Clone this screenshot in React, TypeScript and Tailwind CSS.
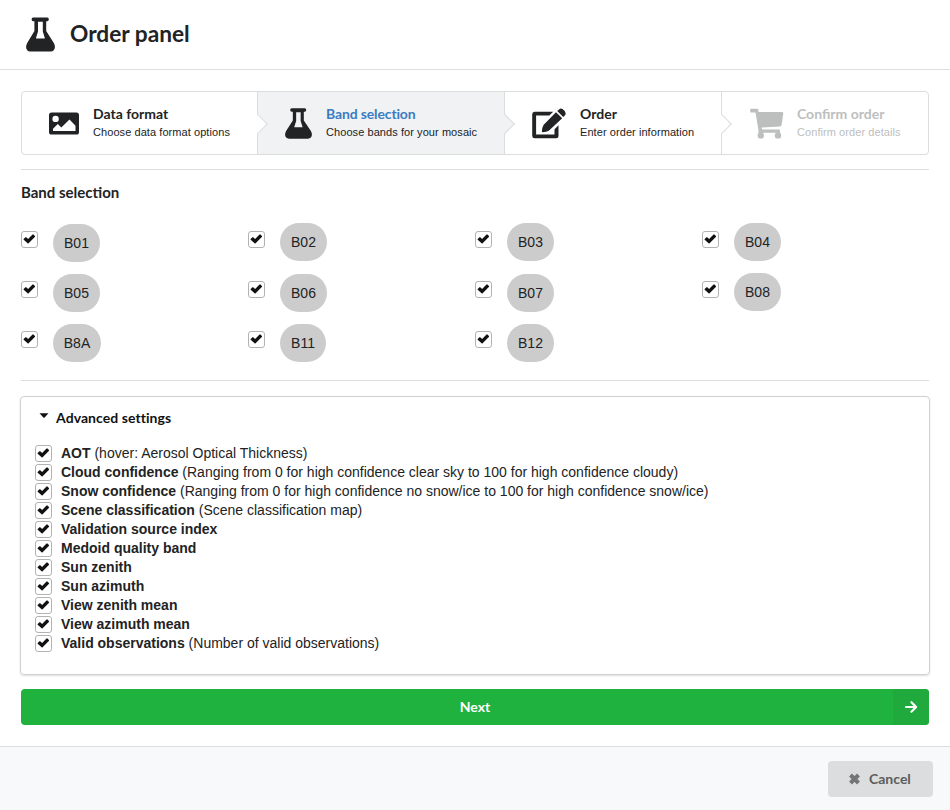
import React from 'react';

const sans = "font-['Liberation_Sans',Arial,sans-serif]";

function Flask({ className }: { className: string }) {
  return (
    <svg viewBox="0 0 30 35" preserveAspectRatio="none" className={className} fill="currentColor" fillRule="evenodd">
      <path d="M7.4 0.4H22Q23.6 0.4 23.6 2.3Q23.6 4.3 22 4.3H20.9V14L28.6 25.8C31.4 30.4 29.4 34.6 25.6 34.6H4.4C.6 34.6-1.4 30.4 1.4 25.8L8.7 14V4.3H7.4Q5.8 4.3 5.8 2.3Q5.8 .4 7.4 .4ZM12.4 4.7V14.6L10.2 21.6H19.6L17.4 14.6V4.7Z" />
    </svg>
  );
}

function Picture() {
  return (
    <svg viewBox="0 0 30 23" className="h-[23px] w-[30px] shrink-0" fill="currentColor" fillRule="evenodd">
      <path d="M2.6 .4H27.4Q30 .4 30 3V20Q30 22.6 27.4 22.6H2.6Q0 22.6 0 20V3Q0 .4 2.6 .4ZM6.6 3.7A3.2 3.2 0 1 0 6.6 10.1A3.2 3.2 0 1 0 6.6 3.7ZM4 19H26.5V13.8L20.5 7.5L12.3 15.4L8.8 12L4 16.8Z" />
    </svg>
  );
}

function Edit() {
  return (
    <svg viewBox="0 0 34 31" className="h-[31px] w-[34px] shrink-0" fill="currentColor">
      <path d="M2.6 3.7H21.2L17.4 7.6H4.1V26.4H22.5V21.2L26.5 17.2V27.8Q26.5 30.3 24 30.3H2.6Q.2 30.3 .2 27.8V6.2Q.2 3.7 2.6 3.7Z" />
      <path d="M24 4.2L30.2 10.2L16.8 22.8Q14.5 24.2 10.7 24.2Q9.8 24.2 9.9 23.3Q10.1 19.3 11.7 16.8ZM25.2 3.1L27 1.4Q28.7 0 30.5 1.1Q33 2.5 33.6 5Q34 6.7 32.6 7.8L31.2 9.1Z" />
    </svg>
  );
}

function Cart() {
  return (
    <svg viewBox="0 0 34 31" className="h-[31px] w-[34px] shrink-0" fill="currentColor">
      <path d="M.8 .8H7.2Q8.4 .8 8.4 2V4H32Q33.4 4 33.3 5.5L31.6 17Q31.4 18.4 29.8 18.6L11.8 19.5L12 21.4H29Q30 21.4 30 23Q30 24.8 29 24.8H10Q9 24.8 8.7 23.6L5.5 4.5H.8Q.1 4.5 .1 2.7Q.1 .8 .8 .8Z" />
      <circle cx="10.8" cy="27.4" r="3.2" />
      <circle cx="28" cy="27.4" r="3.2" />
      <path d="M8.7 22.5H12.5V26H8.7ZM27 22.5H30V26H27Z" />
    </svg>
  );
}

function CheckBox() {
  return (
    <span className="flex h-[17px] w-[17px] shrink-0 items-start rounded-[3px] border border-[#b3b3b3] bg-white pl-px pt-[2px] text-[#111]">
      <svg viewBox="-0.4 0 12 10" className="h-[10px] w-3" fill="currentColor">
        <path d="M.3 5.1L2 3.3Q2.4 3 2.8 3.3L4.7 5.1L9.1.6Q9.6.2 10.1.6L11.5 2.1Q11.8 2.6 11.4 3L5.2 9.3Q4.7 9.7 4.2 9.3L.3 5.8Q0 5.5.3 5.1Z" />
      </svg>
    </span>
  );
}

function Arrow({ tone }: { tone: string }) {
  return (
    <span className={`absolute -right-[8px] top-[25px] z-10 h-[14px] w-[14px] -rotate-45 border-b border-r border-[#dcdddd] ${tone}`} />
  );
}

type StepProps = {
  icon: React.ReactNode;
  title: string;
  detail: string;
  box: string;
  titleTone?: string;
  arrow?: string;
};

function Step({ icon, title, detail, box, titleTone = '', arrow }: StepProps) {
  return (
    <div className={`relative flex h-full items-center ${box}`}>
      {icon}
      <div className="pb-px">
        <div className={`font-[Lato,sans-serif] text-[14px] font-bold leading-[18px] ${titleTone}`}>{title}</div>
        <div className={`${sans} whitespace-nowrap text-[11px] leading-[18px] tracking-[0.07px]`}>{detail}</div>
      </div>
      {arrow && <Arrow tone={arrow} />}
    </div>
  );
}

const bands = [
  { name: 'B01', drop: 'mt-px', width: 'w-[47px]' },
  { name: 'B02', drop: '', width: 'w-[47px]' },
  { name: 'B03', drop: '', width: 'w-[47px]' },
  { name: 'B04', drop: '', width: 'w-[47px]' },
  { name: 'B05', drop: 'mt-px', width: 'w-[47px]' },
  { name: 'B06', drop: 'mt-px', width: 'w-[47px]' },
  { name: 'B07', drop: 'mt-px', width: 'w-[47px]' },
  { name: 'B08', drop: '', width: 'w-[47px]' },
  { name: 'B8A', drop: 'mt-px', width: 'w-[48px]' },
  { name: 'B11', drop: 'mt-px', width: 'w-[46px]' },
  { name: 'B12', drop: 'mt-px', width: 'w-[47px]' },
];

const settings = [
  ['AOT', '(hover: Aerosol Optical Thickness)'],
  ['Cloud confidence', '(Ranging from 0 for high confidence clear sky to 100 for high confidence cloudy)'],
  ['Snow confidence', '(Ranging from 0 for high confidence no snow/ice to 100 for high confidence snow/ice)'],
  ['Scene classification', '(Scene classification map)'],
  ['Validation source index', ''],
  ['Medoid quality band', ''],
  ['Sun zenith', ''],
  ['Sun azimuth', ''],
  ['View zenith mean', ''],
  ['View azimuth mean', ''],
  ['Valid observations', '(Number of valid observations)'],
];

export default function App() {
  return (
    <div className={`flex h-[810px] w-[950px] flex-col overflow-hidden bg-white text-[#222324] ${sans}`}>
      <header className="flex h-[70px] shrink-0 items-center border-b border-[#dcddde] pb-px pl-[26px]">
        <Flask className="h-[35px] w-[29px]" />
        <h1 className="ml-[15px] font-[Lato,sans-serif] text-[22.7px] font-bold leading-7">Order panel</h1>
      </header>

      <main className="flex h-[676px] shrink-0 flex-col px-[21px] pt-[21px]">
        <div className="flex h-[64px] shrink-0 rounded-[4px] border border-[#dcdddd]">
          <Step icon={<Picture />} title="Data format" detail="Choose data format options" box="w-[236px] border-r border-[#dcdddd] pl-[27px] gap-[14px]" arrow="bg-white" />
          <Step icon={<Flask className="h-[31px] w-[27px] shrink-0" />} title="Band selection" detail="Choose bands for your mosaic" box="w-[247px] border-r border-[#dcdddd] bg-[#f0f2f4] pl-[27px] gap-[14px]" titleTone="text-[#3b7cc2] tracking-[-0.14px]" arrow="bg-[#f0f2f4]" />
          <Step icon={<Edit />} title="Order" detail="Enter order information" box="w-[217px] border-r border-[#dcdddd] pl-[27px] gap-[14px]" arrow="bg-white" />
          <Step icon={<Cart />} title="Confirm order" detail="Confirm order details" box="flex-1 pl-[28px] gap-[13px] text-[#bdbebe]" />
        </div>

        <div className="mt-[14px] h-px shrink-0 bg-[#dcdddd]" />
        <h2 className="mt-[12px] font-[Lato,sans-serif] text-[15px] font-bold leading-5">Band selection</h2>

        <div className="mt-[21px] grid h-[150px] w-[908px] shrink-0 grid-cols-4 grid-rows-3">
          {bands.map((band) => (
            <div key={band.name} className="flex items-start">
              <div className="mt-2">
                <CheckBox />
              </div>
              <span className={`ml-[15px] flex h-[38px] items-center justify-center rounded-[20px] bg-[#cccccc] text-[14px] ${band.drop} ${band.width}`}>
                {band.name}
              </span>
            </div>
          ))}
        </div>
        <div className="mt-[7px] h-px shrink-0 bg-[#dcdddd]" />

        <section className="-mx-px mt-[15px] h-[279px] shrink-0 rounded-[4px] border border-[#d0d1d2] pl-[14px] pt-[11px] shadow-[0_1px_2px_0_rgba(34,36,38,0.15)]">
          <div className="flex h-5 items-center pl-1 text-[#111]">
            <svg viewBox="0 0 10 6" className="mb-[5px] h-[6px] w-[10px]" fill="currentColor">
              <path d="M.5.3H9.5L5.6 4.6Q5 5.1 4.4 4.6Z" />
            </svg>
            <h3 className="ml-[7px] font-[Lato,sans-serif] text-[14px] font-bold leading-5 tracking-[0.06px]">Advanced settings</h3>
          </div>
          <ul className="mt-4">
            {settings.map(([name, note]) => (
              <li key={name} className="flex h-[19px] items-center whitespace-nowrap text-[14px] leading-[19px]">
                <CheckBox />
                <span className="ml-[9px]">
                  <b>{name}</b> {note}
                </span>
              </li>
            ))}
          </ul>
        </section>

        <button className="mt-[14px] flex h-[36px] shrink-0 items-center overflow-hidden rounded-[4px] bg-[#20b23f] text-white">
          <span className="flex-1 pb-[2px] pl-[36px] text-center font-[Lato,sans-serif] text-[14px] font-bold">Next</span>
          <span className="flex h-full w-[36px] items-center justify-center bg-[#20a93c]">
            <svg viewBox="0 0 14 14" className="h-[14px] w-[14px]" fill="none" stroke="currentColor" strokeWidth="2.1" strokeLinecap="round" strokeLinejoin="round">
              <path d="M2 7H12M7.4 2.2L12.2 7L7.4 11.8" />
            </svg>
          </span>
        </button>
      </main>

      <footer className="flex h-[64px] shrink-0 items-start justify-end border-t border-[#dcddde] bg-[#f8f9fb] pr-[17px] pt-[14px]">
        <button className="flex h-[36px] w-[105px] items-center rounded-[4px] bg-[#dcddde] pl-[20px] text-[#5b5c5d]">
          <svg viewBox="0 0 12 12" className="h-3 w-[13px] text-[#747576]" fill="none" stroke="currentColor" strokeWidth="4" strokeLinejoin="round">
            <path d="M2 2L10 10M10 2L2 10" />
          </svg>
          <span className="ml-[8px] pb-[2px] font-[Lato,sans-serif] text-[14px] font-bold">Cancel</span>
        </button>
      </footer>
    </div>
  );
}
